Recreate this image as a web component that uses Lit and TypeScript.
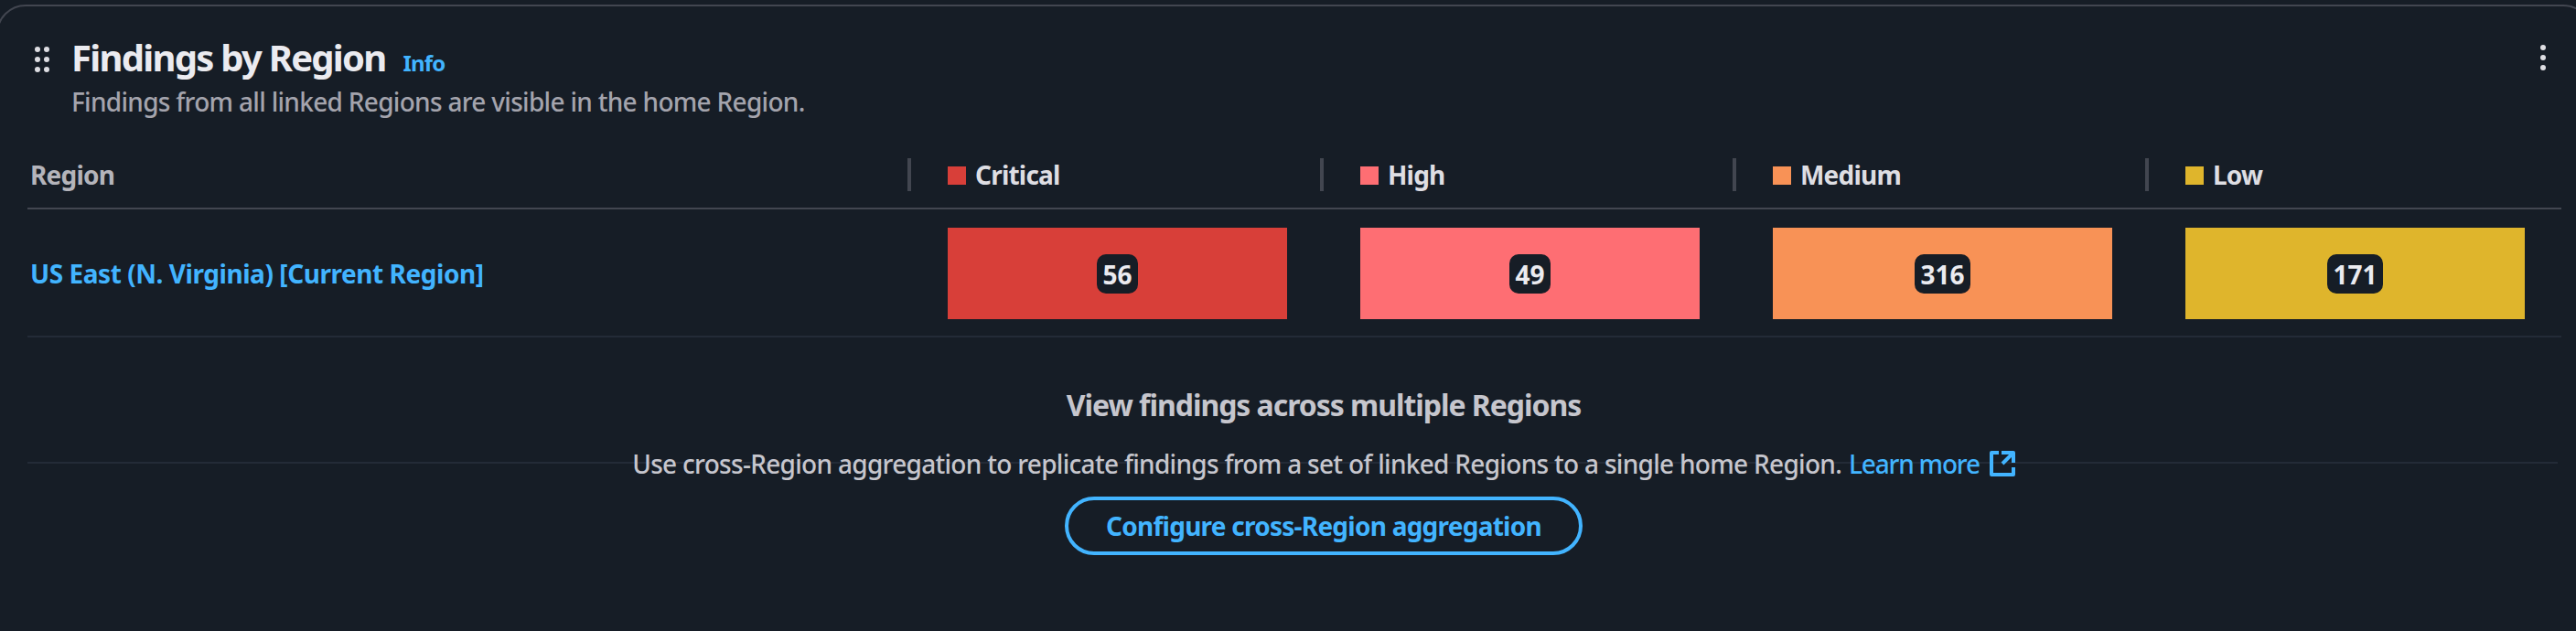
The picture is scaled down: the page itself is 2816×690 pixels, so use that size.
import { LitElement, html, svg, css } from "lit";
import { customElement } from "lit/decorators.js";

interface Severity { name: string; count: number; tone: string; }

const SEVERITIES: Severity[] = [
  { name: "Critical", count: 56, tone: "critical" },
  { name: "High", count: 49, tone: "high" },
  { name: "Medium", count: 316, tone: "medium" },
  { name: "Low", count: 171, tone: "low" },
];

const dot = (x: number, y: number) => svg`<circle cx=${x} cy=${y} r="3"></circle>`;

@customElement("app-root")
export class AppRoot extends LitElement {
  static styles = css`
    :host { display: block; height: 690px; overflow: hidden; background: #161d26;
      font-family: "Noto Sans", "Open Sans", sans-serif; font-size: 28px; line-height: 40px; color: #c6c6cd; white-space: nowrap; }
    * { box-sizing: border-box; }
    .card { margin: 5px -18px 0 -4px; height: 760px; border: 2px solid #424650; border-radius: 32px; padding: 0 32px; }
    .header { display: flex; align-items: flex-start; height: 150px; padding: 32px 17px 0 8px; }
    .grip { width: 16px; height: 28px; margin: 12px 24px 0 0; fill: #dedee3; }
    .titles { flex: 1; }
    .title-row { display: flex; align-items: baseline; gap: 19px; height: 48px; margin-bottom: 4px; }
    h2, h3, p { margin: 0; }
    h2 { font-size: 40px; line-height: 48px; font-weight: 700; letter-spacing: -1.75px; color: #ebebf0; }
    .info { font-size: 24px; font-weight: 700; letter-spacing: -0.8px; color: #42b4ff; }
    .sub { color: #a4a4ad; font-weight: 500; letter-spacing: -0.7px; }
    .kebab { width: 6px; height: 28px; margin-top: 10px; fill: #dedee3; }
    .row { display: grid; grid-template-columns: 966px repeat(4, 451px); width: 2770px; border-bottom: 2px solid #232b37; }
    .head { height: 72px; align-items: center; border-color: #424650; padding-bottom: 2px; font-weight: 700; letter-spacing: -0.8px; }
    .region { padding-left: 3px; color: #b4b4bb; }
    .sev { display: flex; align-items: center; gap: 10px; color: #dedee3; height: 36px; border-left: 4px solid #424650; margin-left: -4px; padding-left: 40px; }
    .swatch { width: 20px; height: 20px; margin-top: 2px; }
    .body { height: 140px; align-items: center; padding-top: 2px; }
    .link { color: #42b4ff; text-decoration: none; }
    .name { padding-left: 3px; font-weight: 700; letter-spacing: -0.45px; }
    .bar { display: flex; align-items: center; justify-content: center; height: 100px; width: 371px; margin-left: 40px; }
    .badge { display: flex; align-items: center; justify-content: center; height: 43px; margin-top: 1px; padding: 0 6px; border-radius: 10px; background: #161d26; color: #ebebf0; font-weight: 700; }
    .critical { background: #d83f39; } .high { background: #fe6e73; } .medium { background: #f89256; } .low { background: #dfb52c; }
    .empty { display: grid; grid-template-rows: 136px 1fr; width: 2766px; height: 240px; }
    .rule { grid-area: 1 / 1; border-bottom: 2px solid #232b37; height: 138px; }
    .content { grid-area: 1 / 1 / 3 / 2; display: flex; flex-direction: column; align-items: center; padding: 54px 0 0 68px; }
    h3 { font-size: 32px; line-height: 40px; font-weight: 700; letter-spacing: -1.05px; margin-bottom: 24px; }
    .text { display: flex; margin-bottom: 16px; font-weight: 500; letter-spacing: -0.7px; }
    .more { display: flex; align-items: center; margin-left: 8px; letter-spacing: -1.2px; gap: 11px; }
    .ext { width: 28px; height: 28px; fill: none; stroke: #42b4ff; stroke-width: 4; stroke-linejoin: round; }
    button { font: inherit; font-weight: 700; letter-spacing: -0.75px; color: #42b4ff; background: #161d26; border: 4px solid #42b4ff; border-radius: 40px; height: 64px; width: 566px; padding: 0; }
  `;

  render() {
    return html`
      <section class="card">
        <header class="header">
          <svg class="grip" viewBox="0 0 16 28">${[3, 13].map(x => [3, 14, 25].map(y => dot(x, y)))}</svg>
          <div class="titles">
            <div class="title-row"><h2>Findings by Region</h2><a class="info">Info</a></div>
            <p class="sub">Findings from all linked Regions are visible in the home Region.</p>
          </div>
          <svg class="kebab" viewBox="0 0 6 28">${[3, 14, 25].map(y => dot(3, y))}</svg>
        </header>
        <div class="row head">
          <span class="region">Region</span>
          ${SEVERITIES.map(s => html`<span class="sev"><i class="swatch ${s.tone}"></i><span>${s.name}</span></span>`)}
        </div>
        <div class="row body">
          <a class="link name">US East (N. Virginia) [Current Region]</a>
          ${SEVERITIES.map(s => html`<div class="bar ${s.tone}"><span class="badge">${s.count}</span></div>`)}
        </div>
        <div class="empty">
          <div class="rule"></div>
          <div class="content">
            <h3>View findings across multiple Regions</h3>
            <p class="text"><span class="desc">Use cross-Region aggregation to replicate findings from a set of linked Regions to a single home Region.</span><a class="link more"><span>Learn more</span><svg class="ext" viewBox="0 0 28 28"><path d="M10 2H2V26H26V18M13 2H26V13M26 2L14 14"/></svg></a></p>
            <button>Configure cross-Region aggregation</button>
          </div>
        </div>
      </section>`;
  }
}
